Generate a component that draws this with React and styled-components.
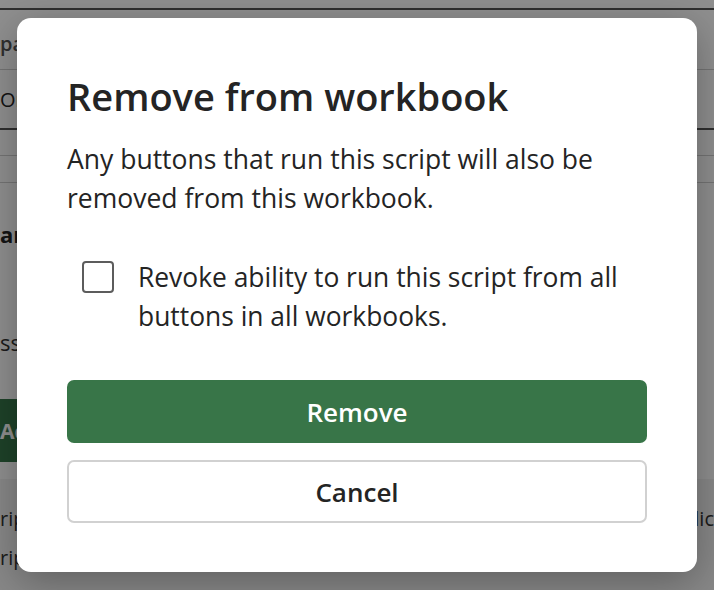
import React from 'react';
import styled, { createGlobalStyle } from 'styled-components';

const GlobalStyle = createGlobalStyle`
  html, body {
    margin: 0;
    padding: 0;
    width: 714px;
    height: 590px;
    overflow: hidden;
    font-family: "Open Sans", "Noto Sans", sans-serif;
  }
`;

const Page = styled.div`
  position: relative;
  width: 714px;
  height: 590px;
  overflow: hidden;
  background: #fff;
  color: #242424;
  display: flex;
  flex-direction: column;
`;

const TopStrip = styled.div`
  height: 8px;
  border-bottom: 2px solid #555;
`;

const TableRow = styled.div`
  height: ${(p) => p.h}px;
  display: flex;
  align-items: center;
  justify-content: space-between;
  border-bottom: ${(p) => (p.dark ? '2px solid #555' : '1px solid #cfcfcf')};
  font-size: ${(p) => p.size || 20}px;
  font-weight: ${(p) => p.weight || 400};
  color: ${(p) => p.color || '#242424'};
  white-space: nowrap;
  padding-top: ${(p) => p.shift || 0}px;
  box-sizing: border-box;
`;

const Section = styled.div`
  display: flex;
  flex-direction: column;
  padding-top: 34px;
`;

const SectionTitle = styled.div`
  font-size: 22px;
  font-weight: 700;
  height: 34px;
  line-height: 34px;
`;

const SectionText = styled.div`
  font-size: 22px;
  height: 34px;
  line-height: 34px;
  margin-top: 74px;
  color: #333;
`;

const GreenButton = styled.div`
  margin-top: 40px;
  width: 220px;
  height: 63px;
  background: #37774a;
  color: #fff;
  font-size: 21px;
  font-weight: 700;
  display: flex;
  align-items: center;
  white-space: nowrap;
`;

const Footer = styled.div`
  margin-top: 17px;
  flex: 1;
  background: #f2f2f2;
  display: flex;
  flex-direction: column;
  padding-top: 24px;
  gap: 8px;
`;

const FooterRow = styled.div`
  display: flex;
  justify-content: space-between;
  font-size: 20px;
  line-height: 31px;
  color: #333;
  white-space: nowrap;
`;

const Overlay = styled.div`
  position: absolute;
  inset: 0;
  background: rgba(0, 0, 0, 0.44);
  display: flex;
  justify-content: center;
  align-items: flex-start;
  padding-top: 18px;
`;

const Dialog = styled.div`
  width: 680px;
  box-sizing: border-box;
  padding: 53px 50px 49px;
  background: #fff;
  border-radius: 14px;
  box-shadow: 0 10px 40px rgba(0, 0, 0, 0.3);
  display: flex;
  flex-direction: column;
`;

const Title = styled.h2`
  margin: 0;
  font-size: 38px;
  line-height: 50px;
  font-weight: 600;
  color: #242424;
`;

const Message = styled.p`
  margin: 19px 0 0;
  font-size: 26.5px;
  line-height: 39px;
  color: #242424;
`;

const CheckRow = styled.label`
  display: flex;
  align-items: flex-start;
  gap: 24px;
  margin-top: 40px;
  padding-left: 15px;
  cursor: pointer;
`;

const Box = styled.span`
  flex: none;
  width: 28px;
  height: 28px;
  margin-top: 3px;
  border: 2px solid #5c5c5c;
  border-radius: 4px;
  background: #fff;
`;

const CheckText = styled.span`
  font-size: 26.4px;
  line-height: 39px;
  color: #242424;
`;

const Actions = styled.div`
  display: flex;
  flex-direction: column;
  gap: 17px;
  margin-top: 44px;
`;

const Button = styled.button`
  height: 63px;
  border-radius: 7px;
  font-family: inherit;
  font-size: 26px;
  font-weight: 600;
  cursor: pointer;
  background: ${(p) => (p.primary ? '#387548' : '#fff')};
  color: ${(p) => (p.primary ? '#fff' : '#242424')};
  border: ${(p) => (p.primary ? 'none' : '2px solid #d1d1d1')};
`;

export default function App() {
  return (
    <>
      <GlobalStyle />
      <Page>
        <TopStrip />
        <TableRow h={60} size={20} weight={600} color="#555" shift={8}>
          <span>pa</span>
        </TableRow>
        <TableRow h={60} size={20} dark>
          <span>Or</span>
        </TableRow>
        <TableRow h={26} />
        <TableRow h={27} />
        <Section>
          <SectionTitle>are</SectionTitle>
          <SectionText>ss</SectionText>
        </Section>
        <GreenButton>Ac</GreenButton>
        <Footer>
          <FooterRow>
            <span>rip</span>
            <span>lic</span>
          </FooterRow>
          <FooterRow>
            <span>rip</span>
          </FooterRow>
        </Footer>

        <Overlay>
          <Dialog role="dialog" aria-labelledby="remove-title">
            <Title id="remove-title">Remove from workbook</Title>
            <Message>
              Any buttons that run this script will also be removed from this workbook.
            </Message>
            <CheckRow>
              <Box />
              <CheckText>
                Revoke ability to run this script from all buttons in all workbooks.
              </CheckText>
            </CheckRow>
            <Actions>
              <Button primary>Remove</Button>
              <Button>Cancel</Button>
            </Actions>
          </Dialog>
        </Overlay>
      </Page>
    </>
  );
}
